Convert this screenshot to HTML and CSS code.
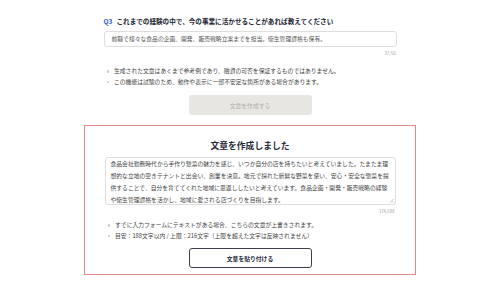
FILE: index.html
```html
<!DOCTYPE html>
<html lang="ja">
<head>
<meta charset="utf-8">
<title>文章作成</title>
<link rel="stylesheet" href="styles.css">
</head>
<body>
<main class="page">
  <section class="question">
    <div class="q-label"><span class="q-num">Q3</span>これまでの経験の中で、今の事業に活かせることがあれば教えてください</div>
    <div class="input">前職で様々な食品の企画、開発、販売戦略立案までを担当。衛生管理資格も保有。</div>
    <div class="counter">37/50</div>
    <ul class="notes">
      <li>生成された文章はあくまで参考例であり、融資の可否を保証するものではありません。</li>
      <li>この機能は試験のため、動作や表示に一部不安定な箇所がある場合があります。</li>
    </ul>
    <div class="btn-row"><button class="btn btn-disabled" type="button">文章を作成する</button></div>
  </section>

  <section class="result">
    <h2 class="result-title">文章を作成しました</h2>
    <div class="textarea">
      <p class="textarea-text">食品会社勤務時代から手作り惣菜の魅力を感じ、いつか自分の店を持ちたいと考えていました。たまたま理想的な立地の空きテナントと出会い、創業を決意。地元で採れた新鮮な野菜を使い、安心・安全な惣菜を提供することで、自分を育ててくれた地域に恩返ししたいと考えています。食品企画・開発・販売戦略の経験や衛生管理資格を活かし、地域に愛される店づくりを目指します。</p>
      <svg class="grip" width="5" height="5" viewBox="0 0 5 5"><path d="M4.5 1 L1 4.5 M4.5 3 L3 4.5" stroke="#9a9a9a" stroke-width="0.6" fill="none"/></svg>
    </div>
    <div class="counter">174/188</div>
    <ul class="notes">
      <li>すでに入力フォームにテキストがある場合、こちらの文章が上書きされます。</li>
      <li>目安：188文字以内 / 上限：216文字（上限を超えた文字は反映されません）</li>
    </ul>
    <div class="btn-row"><button class="btn btn-outline" type="button">文章を貼り付ける</button></div>
  </section>
</main>
</body>
</html>
```

FILE: styles.css
```css
* { box-sizing: border-box; }

html, body {
  margin: 0;
  padding: 0;
  background: #ffffff;
}

body {
  font-family: "Noto Sans CJK JP", "Noto Sans", sans-serif;
  color: #333;
}

.page {
  width: 332px;
  margin: 0 auto;
  padding-top: 16px;
}

.question {
  width: 293px;
  margin: 0 auto;
}

.q-label {
  font-size: 6.6px;
  line-height: 10px;
  font-weight: 700;
  color: #222633;
  white-space: nowrap;
}

.q-num {
  color: #3057c8;
  margin-right: 4px;
}

.input {
  margin-top: 5px;
  height: 16px;
  border: 1px solid #dedede;
  border-radius: 3px;
  padding: 0 7px;
  font-size: 5.8px;
  line-height: 14px;
  color: #555;
  white-space: nowrap;
}

.counter {
  margin-top: 3px;
  font-size: 4.2px;
  line-height: 6px;
  text-align: right;
  color: #999;
  padding-right: 1px;
}

.notes {
  list-style: none;
  margin: 10px 0 0;
  padding: 0;
}

.notes li {
  display: flex;
  align-items: center;
  gap: 5px;
  font-size: 5.8px;
  line-height: 10.5px;
  color: #444;
  padding-left: 3px;
  white-space: nowrap;
}

.notes li::before {
  content: "";
  width: 2.5px;
  height: 2.5px;
  border-radius: 50%;
  background: #c8c8c8;
  flex: none;
}

.btn-row {
  display: flex;
  justify-content: center;
}

.btn {
  width: 123px;
  height: 20px;
  border-radius: 3px;
  font-family: inherit;
  font-size: 5.8px;
  padding: 0;
}

.question .btn-row { margin-top: 8px; }

.btn-disabled {
  background: #e8e6e3;
  border: none;
  color: #b3aea8;
}

.result {
  margin-top: 10px;
  border: 1.5px solid #e28b8b;
  padding: 13px 19.5px 6px;
}

.result-title {
  margin: 0;
  text-align: center;
  font-size: 8.8px;
  line-height: 14px;
  font-weight: 700;
  color: #262a38;
}

.textarea {
  position: relative;
  margin-top: 4px;
  height: 48px;
  border: 1px solid #dedede;
  border-radius: 3px;
  padding: 0 5px;
  overflow: hidden;
}

.textarea-text {
  margin: 0;
  font-size: 5.8px;
  line-height: 12px;
  color: #444;
}

.grip {
  position: absolute;
  right: 1px;
  bottom: 1px;
}

.result .counter { margin-top: 3px; }

.result .notes { margin-top: 6px; }

.result .btn-row { margin-top: 7px; }

.btn-outline {
  background: #fff;
  border: 1px solid #3b3d4a;
  color: #262a38;
  font-weight: 700;
}
```
